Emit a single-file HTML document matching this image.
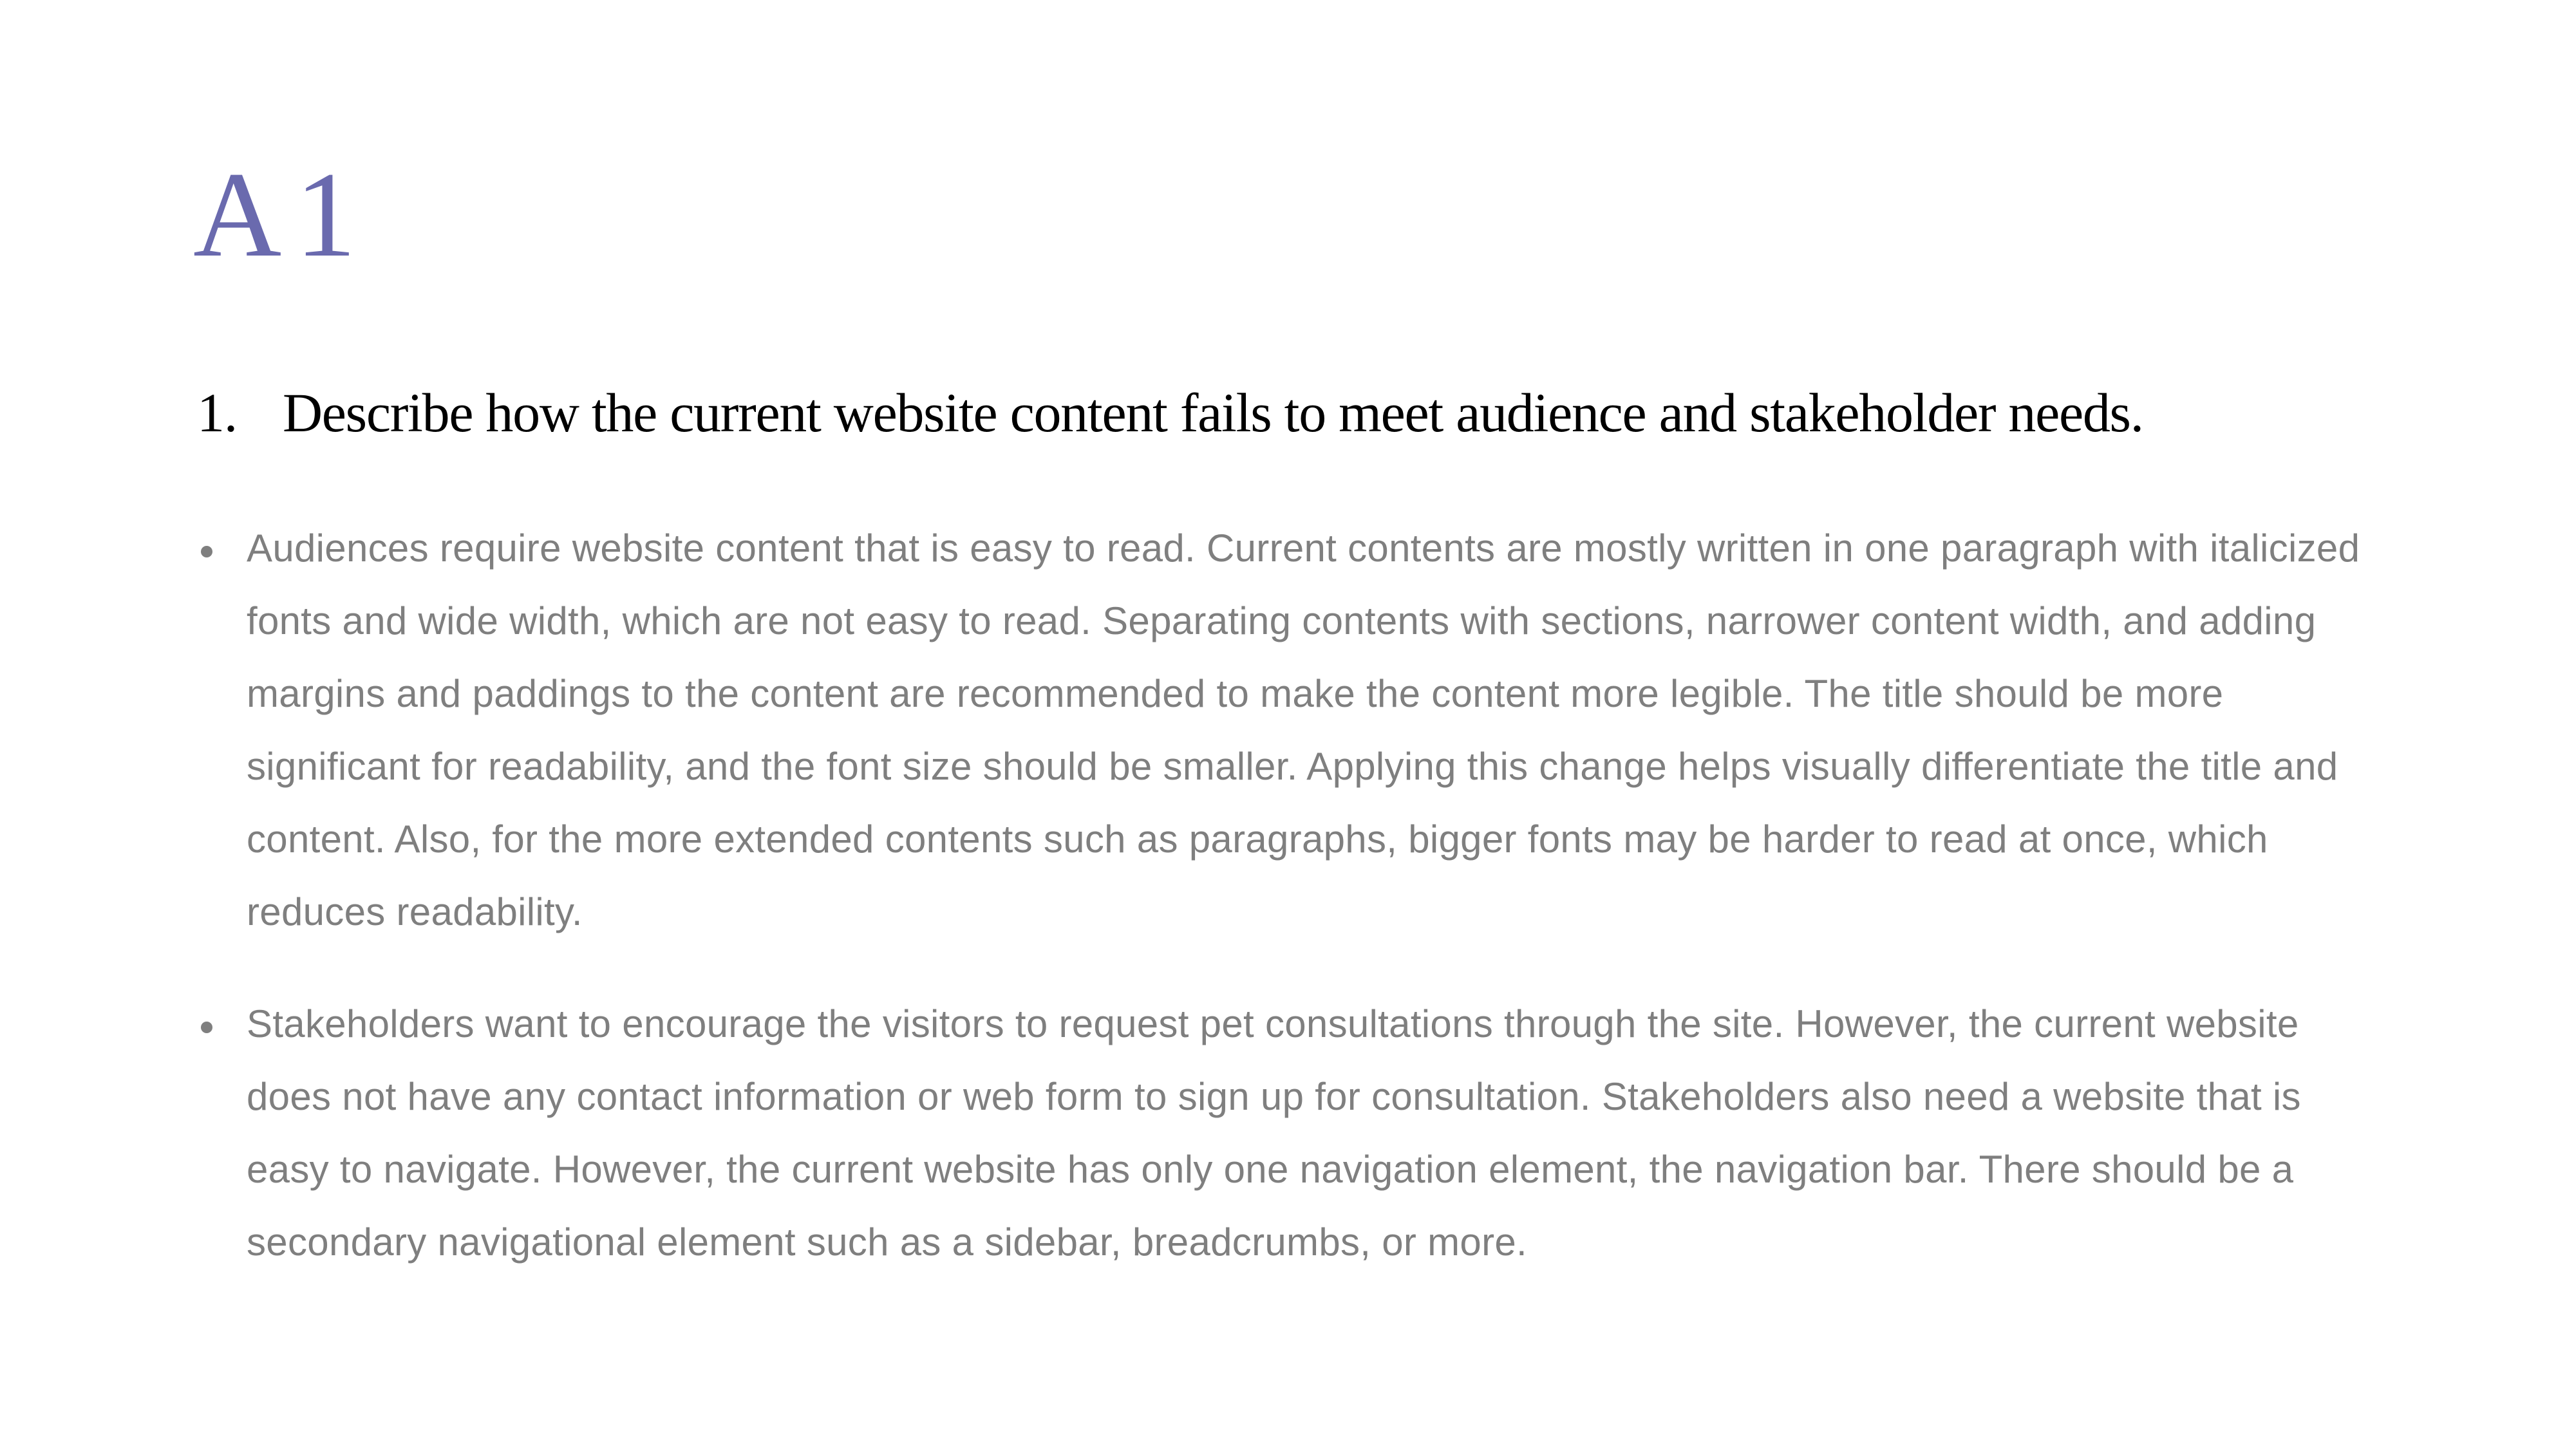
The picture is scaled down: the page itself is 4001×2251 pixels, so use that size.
<!DOCTYPE html>
<html><head><meta charset="utf-8"><style>
html,body{margin:0;padding:0;background:#fff;width:4001px;height:2251px;overflow:hidden;position:relative}
.a{position:absolute;white-space:nowrap;line-height:1}
.t{font-family:"Liberation Serif",serif;color:#6a6aae;font-size:190px;left:300px;top:239px;letter-spacing:-8px}
.h{font-family:"Liberation Serif",serif;color:#000;font-size:86px;top:598px;letter-spacing:-1.3px}
.b{font-family:"Liberation Sans",sans-serif;color:#7f7f7f;font-size:60px;letter-spacing:0.3px;left:383px}
.d{position:absolute;width:18px;height:18px;border-radius:50%;background:#7f7f7f;left:312px}
</style></head><body>
<div class="a t">A 1</div>
<div class="a h" style="left:306px">1.</div>
<div class="a h" style="left:439px">Describe how the current website content fails to meet audience and stakeholder needs.</div>

<div class="d" style="top:848px"></div>
<div class="a b" style="top:822px">Audiences require website content that is easy to read. Current contents are mostly written in one paragraph with italicized</div>
<div class="a b" style="top:935px">fonts and wide width, which are not easy to read. Separating contents with sections, narrower content width, and adding</div>
<div class="a b" style="top:1048px">margins and paddings to the content are recommended to make the content more legible. The title should be more</div>
<div class="a b" style="top:1161px">significant for readability, and the font size should be smaller. Applying this change helps visually differentiate the title and</div>
<div class="a b" style="top:1274px">content. Also, for the more extended contents such as paragraphs, bigger fonts may be harder to read at once, which</div>
<div class="a b" style="top:1387px">reduces readability.</div>

<div class="d" style="top:1587px"></div>
<div class="a b" style="top:1561px">Stakeholders want to encourage the visitors to request pet consultations through the site. However, the current website</div>
<div class="a b" style="top:1674px">does not have any contact information or web form to sign up for consultation. Stakeholders also need a website that is</div>
<div class="a b" style="top:1787px">easy to navigate. However, the current website has only one navigation element, the navigation bar. There should be a</div>
<div class="a b" style="top:1900px">secondary navigational element such as a sidebar, breadcrumbs, or more.</div>
</body></html>
